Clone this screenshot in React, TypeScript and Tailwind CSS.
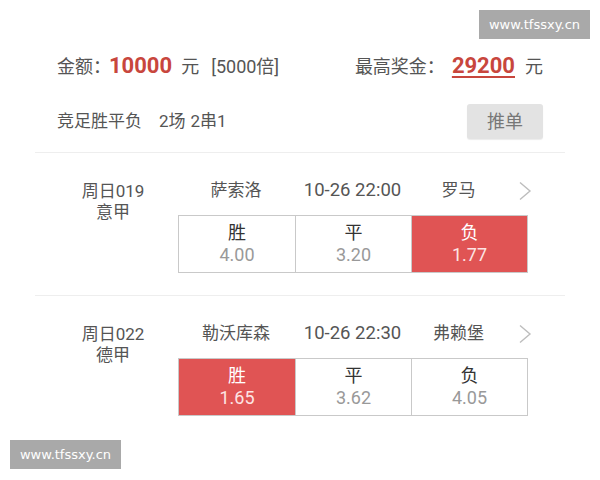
import React from "react";

interface Match {
  code: string;
  league: string;
  home: string;
  time: string;
  away: string;
  odds: string[];
  picked: number;
}

const matches: Match[] = [
  { code: "周日019", league: "意甲", home: "萨索洛", time: "10-26 22:00", away: "罗马", odds: ["4.00", "3.20", "1.77"], picked: 2 },
  { code: "周日022", league: "德甲", home: "勒沃库森", time: "10-26 22:30", away: "弗赖堡", odds: ["1.65", "3.62", "4.05"], picked: 0 },
];

const labels = ["胜", "平", "负"];

const Chevron = () => (
  <svg width="14" height="20" viewBox="0 0 14 20" fill="none">
    <path d="M2 1.5 L12 10 L2 18.5" stroke="#bdbdbd" strokeWidth="1.4" />
  </svg>
);

const MatchRow: React.FC<{ m: Match; last: boolean }> = ({ m, last }) => (
  <div className={`flex pt-6 pb-[22px] pl-[13px] ${last ? "" : "border-b border-[#eeeeee]"}`}>
    {/* left: code + league */}
    <div className="w-[130px] pt-[4px] text-center text-[17px] leading-[21px] text-[#555]">
      <div>{m.code}</div>
      <div>{m.league}</div>
    </div>
    <div className="flex flex-col">
      <div className="grid grid-cols-[116px_117px_95px_28px] items-center h-6 text-[17px] text-[#555]">
        <div className="text-center">{m.home}</div>
        <div className="text-center text-[18.5px]">{m.time}</div>
        <div className="text-center">{m.away}</div>
        <div className="flex justify-end pr-[2px]">
          <Chevron />
        </div>
      </div>
      <div className="mt-[14px] w-[350px] h-[58px] grid grid-cols-3 border border-[#c9c9c9]">
        {m.odds.map((o, i) => {
          const on = i === m.picked;
          return (
            <div
              key={i}
              className={`pt-[6px] text-center ${i > 0 ? "border-l border-[#c9c9c9]" : ""} ${
                on ? "bg-[#e05454]" : "bg-white"
              }`}
            >
              <div className={`text-[18px] leading-[22px] ${on ? "text-white" : "text-[#333]"}`}>{labels[i]}</div>
              <div className={`text-[18px] leading-[22px] ${on ? "text-[#fde4e4]" : "text-[#999]"}`}>{o}</div>
            </div>
          );
        })}
      </div>
    </div>
  </div>
);

const Watermark: React.FC<{ className: string }> = ({ className }) => (
  <div
    className={`absolute w-[111px] h-[29px] bg-[#a9a9a9] text-white text-[13px] flex items-center justify-center ${className}`}
    style={{ fontFamily: '"DejaVu Sans", sans-serif' }}
  >
    www.tfssxy.cn
  </div>
);

export default function App() {
  return (
    <div
      className="relative w-[600px] h-[480px] bg-white overflow-hidden"
      style={{ fontFamily: 'Roboto, "Noto Sans CJK SC", sans-serif' }}
    >
      <div className="pt-[50px]">
        {/* amount row */}
        <div className="px-[57px] h-[30px] flex items-center justify-between text-[18px] text-[#555]">
          <div className="flex items-baseline">
            <span>金额：</span>
            <span className="-ml-[2px] text-[22px] font-bold text-[#c8463d]">10000</span>
            <span className="ml-[9px]">元</span>
            <span className="ml-[12px]">[5000倍]</span>
          </div>
          <div className="flex items-baseline">
            <span>最高奖金：</span>
            <span className="ml-[7px] text-[22px] font-bold text-[#c8463d] underline underline-offset-[3px] decoration-[2px]">
              29200
            </span>
            <span className="ml-[10px]">元</span>
          </div>
        </div>

        {/* play type row */}
        <div className="mt-6 px-[57px] h-[35px] flex items-center justify-between text-[17px] text-[#555]">
          <div>
            竞足胜平负<span className="ml-[17px]">2场</span>
            <span className="ml-[5px]">2串1</span>
          </div>
          <button className="w-[76px] h-[35px] rounded-[3px] bg-[#e3e3e3] text-[18px] text-[#777] shadow-[0_1px_1px_rgba(0,0,0,0.08)]">
            推单
          </button>
        </div>

        <div className="mt-[13px] mx-[35px] border-t border-[#eeeeee]">
          {matches.map((m, i) => (
            <MatchRow key={m.code} m={m} last={i === matches.length - 1} />
          ))}
        </div>
      </div>

      <Watermark className="left-[479px] top-[10px]" />
      <Watermark className="left-[10px] top-[440px]" />
    </div>
  );
}
